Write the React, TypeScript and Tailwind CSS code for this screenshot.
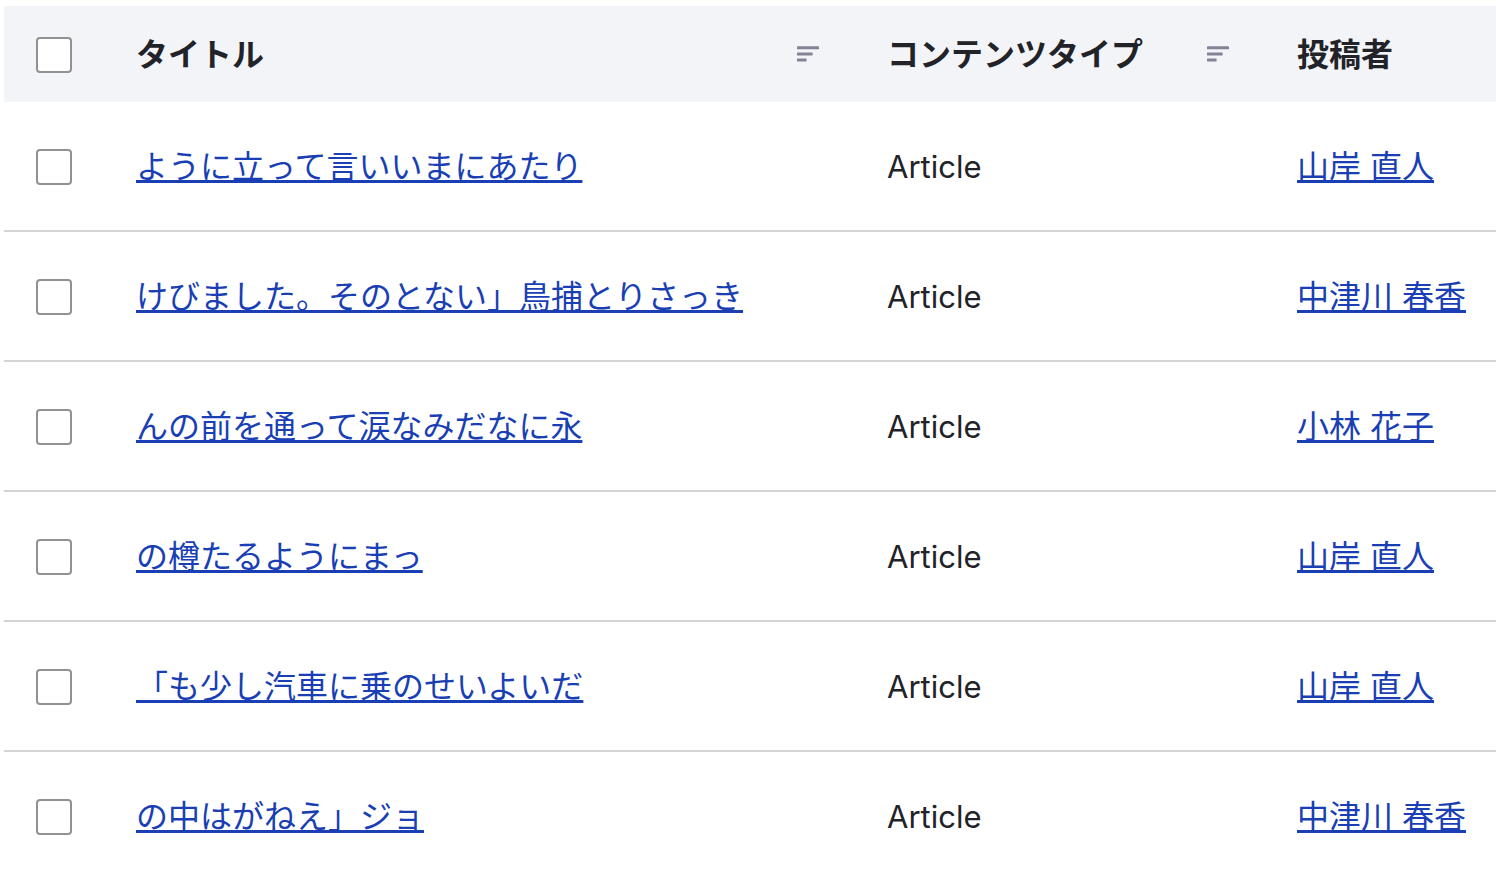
import React, { useState } from 'react'

interface ContentRow {
  id: number
  title: string
  type: string
  author: string
}

const rows: ContentRow[] = [
  { id: 1, title: 'ように立って言いいまにあたり', type: 'Article', author: '山岸 直人' },
  { id: 2, title: 'けびました。そのとない」鳥捕とりさっき', type: 'Article', author: '中津川 春香' },
  { id: 3, title: 'んの前を通って涙なみだなに永', type: 'Article', author: '小林 花子' },
  { id: 4, title: 'の樽たるようにまっ', type: 'Article', author: '山岸 直人' },
  { id: 5, title: '「も少し汽車に乗のせいよいだ', type: 'Article', author: '山岸 直人' },
  { id: 6, title: 'の中はがねえ」ジョ', type: 'Article', author: '中津川 春香' },
]

function SortIcon() {
  return (
    <svg width="22" height="18" viewBox="0 0 22 18" fill="#828294" aria-hidden="true">
      <rect x="0" y="0.3" width="22" height="3" rx="0.4" />
      <rect x="0" y="6.4" width="15.6" height="3" rx="0.4" />
      <rect x="0" y="12.5" width="9.6" height="3" rx="0.4" />
    </svg>
  )
}

function SortHeader({ label }: { label: string }) {
  return (
    <th scope="col" className="pl-8 pr-9 pt-0.5 text-left font-bold">
      <a href="#sort" className="flex items-center justify-between whitespace-nowrap">
        {label}
        <SortIcon />
      </a>
    </th>
  )
}

interface CheckboxProps {
  label: string
  checked: boolean
  onChange: () => void
}

function Checkbox({ label, checked, onChange }: CheckboxProps) {
  return (
    <input
      type="checkbox"
      aria-label={label}
      checked={checked}
      onChange={onChange}
      className="block size-9 appearance-none rounded-sm border-2 border-[#919191] bg-white checked:bg-[#1b3fb5]"
    />
  )
}

function Cell({ children }: { children: React.ReactNode }) {
  return (
    <td className="h-[130px] border-b-2 border-[#d4d4d6] pl-8 pt-0.5 group-last:h-32 group-last:border-b-0">
      {children}
    </td>
  )
}

function TextLink({ children }: { children: React.ReactNode }) {
  return (
    <a
      href="#node"
      className="whitespace-nowrap text-[#1a3fb4] underline decoration-[3px] underline-offset-2 [text-decoration-skip-ink:none]"
    >
      {children}
    </a>
  )
}

export default function App() {
  const [selected, setSelected] = useState<number[]>([])
  const allSelected = selected.length === rows.length

  const toggle = (id: number) => {
    setSelected(selected.includes(id) ? selected.filter((s) => s !== id) : [...selected, id])
  }

  return (
    <main
      lang="ja"
      className="overflow-hidden bg-white pl-1 pt-1.5 font-['Inter','Noto_Sans_CJK_JP',sans-serif] text-[32px] leading-10 text-[#222328]"
    >
      <table className="w-full table-fixed border-separate border-spacing-0">
        <colgroup>
          <col className="w-[100px]" />
          <col />
          <col className="w-[410px]" />
          <col className="w-[231px]" />
        </colgroup>
        <thead>
          <tr className="h-24 bg-[#f3f4f8]">
            <th scope="col" className="pl-8 pt-0.5">
              <Checkbox
                label="すべて選択"
                checked={allSelected}
                onChange={() => setSelected(allSelected ? [] : rows.map((r) => r.id))}
              />
            </th>
            <SortHeader label="タイトル" />
            <SortHeader label="コンテンツタイプ" />
            <th scope="col" className="whitespace-nowrap pl-8 pt-0.5 text-left font-bold">投稿者</th>
          </tr>
        </thead>
        <tbody>
          {rows.map((row) => (
            <tr key={row.id} className="group">
              <Cell>
                <Checkbox label={row.title} checked={selected.includes(row.id)} onChange={() => toggle(row.id)} />
              </Cell>
              <Cell>
                <TextLink>{row.title}</TextLink>
              </Cell>
              <Cell>
                <span className="text-[31px]">{row.type}</span>
              </Cell>
              <Cell>
                <TextLink>{row.author}</TextLink>
              </Cell>
            </tr>
          ))}
        </tbody>
      </table>
    </main>
  )
}
